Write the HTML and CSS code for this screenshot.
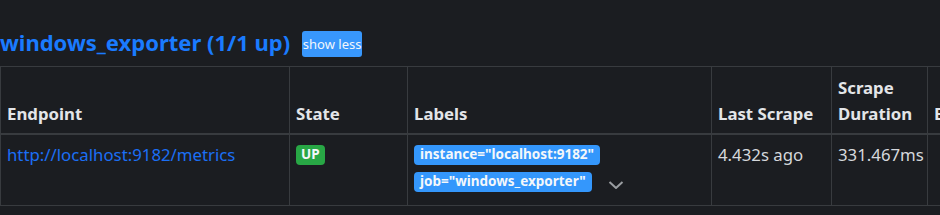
FILE: index.html
```html
<!DOCTYPE html>
<html lang="en">
<head>
<meta charset="utf-8">
<title>Targets</title>
<link rel="stylesheet" href="styles.css">
</head>
<body>
<main class="page">
  <div class="pool-header">
    <h2 class="pool-title"><a href="#windows_exporter">windows_exporter (1/1 up)</a></h2>
    <button class="btn-toggle" type="button">show less</button>
  </div>
  <div class="table-wrap">
    <table class="targets">
      <colgroup>
        <col class="c-endpoint">
        <col class="c-state">
        <col class="c-labels">
        <col class="c-last">
        <col class="c-duration">
        <col class="c-error">
      </colgroup>
      <thead>
        <tr>
          <th>Endpoint</th>
          <th>State</th>
          <th>Labels</th>
          <th>Last Scrape</th>
          <th>Scrape Duration</th>
          <th>Error</th>
        </tr>
      </thead>
      <tbody>
        <tr>
          <td><a class="endpoint" href="#metrics">http://localhost:9182/metrics</a></td>
          <td><div class="label-line"><span class="badge badge-up">UP</span></div></td>
          <td>
            <div class="labels">
              <div class="label-line"><span class="badge badge-label">instance="localhost:9182"</span></div>
              <div class="label-line">
                <span class="badge badge-label">job="windows_exporter"</span>
                <button class="btn-chevron" type="button" aria-label="show more">
                  <svg width="16" height="8" viewBox="0 0 16 8"><polyline points="1.5,1 8,7 14.5,1" fill="none" stroke="#9a9da1" stroke-width="2"/></svg>
                </button>
              </div>
            </div>
          </td>
          <td>4.432s ago</td>
          <td>331.467ms</td>
          <td></td>
        </tr>
      </tbody>
    </table>
  </div>
</main>
</body>
</html>
```

FILE: styles.css
```css
html, body {
  margin: 0;
  padding: 0;
  background: #1b1d21;
  overflow: hidden;
}

.page {
  width: 940px;
  height: 215px;
  overflow: hidden;
  font-family: "Noto Sans", "Open Sans", sans-serif;
  font-size: 16.8px;
  line-height: 26px;
  color: #dcdfe3;
  padding-top: 27px;
  box-sizing: border-box;
}

.pool-header {
  display: flex;
  align-items: center;
  gap: 12px;
  height: 34px;
  margin-bottom: 5px;
}

.pool-title {
  margin: 0 0 3px;
  font-size: 22px;
  font-weight: 700;
  line-height: 1.2;
}

.pool-title a {
  color: #1a7bff;
  text-decoration: none;
}

.btn-toggle {
  height: 26px;
  width: 60px;
  padding: 0;
  border: none;
  border-radius: 3px;
  background: #3897fc;
  color: #f2f6fb;
  font-family: inherit;
  font-size: 13px;
  line-height: 26px;
}

.table-wrap {
  width: 940px;
  overflow: hidden;
}

.targets {
  table-layout: fixed;
  width: 1100px;
  border-collapse: collapse;
}

.c-endpoint { width: 289px; }
.c-state { width: 118px; }
.c-labels { width: 304px; }
.c-last { width: 120px; }
.c-duration { width: 96px; }
.c-error { width: 173px; }

.targets th,
.targets td {
  border: 1px solid #383b3f;
  text-align: left;
}

.targets th {
  vertical-align: bottom;
  font-weight: 700;
  color: #e3e5e8;
  border-bottom-width: 2px;
  padding: 8px 6px 6px;
}

.targets td {
  vertical-align: top;
  color: #d5d8dc;
  padding: 7px 6px 10px;
}

.endpoint {
  color: #1b6ff5;
  text-decoration: none;
}

.badge {
  display: inline-block;
  font-size: 13.5px;
  font-weight: 700;
  line-height: 1;
  padding: 3px 6px;
  border-radius: 4px;
  color: #f4f7fa;
  white-space: nowrap;
}

.badge-up {
  background: #28a745;
  padding: 3px 5px;
}

.badge-label {
  background: #3497fc;
}

.labels {
  display: flex;
  flex-direction: column;
  gap: 1px;
}

.label-line {
  display: flex;
  align-items: center;
  height: 26px;
}

.label-line .badge-label + .btn-chevron {
  margin-left: 16px;
}

.btn-chevron {
  background: none;
  border: none;
  padding: 0;
  margin: 12px 0 0 16px;
  align-self: flex-start;
  width: 16px;
  height: 8px;
  display: flex;
}
```
